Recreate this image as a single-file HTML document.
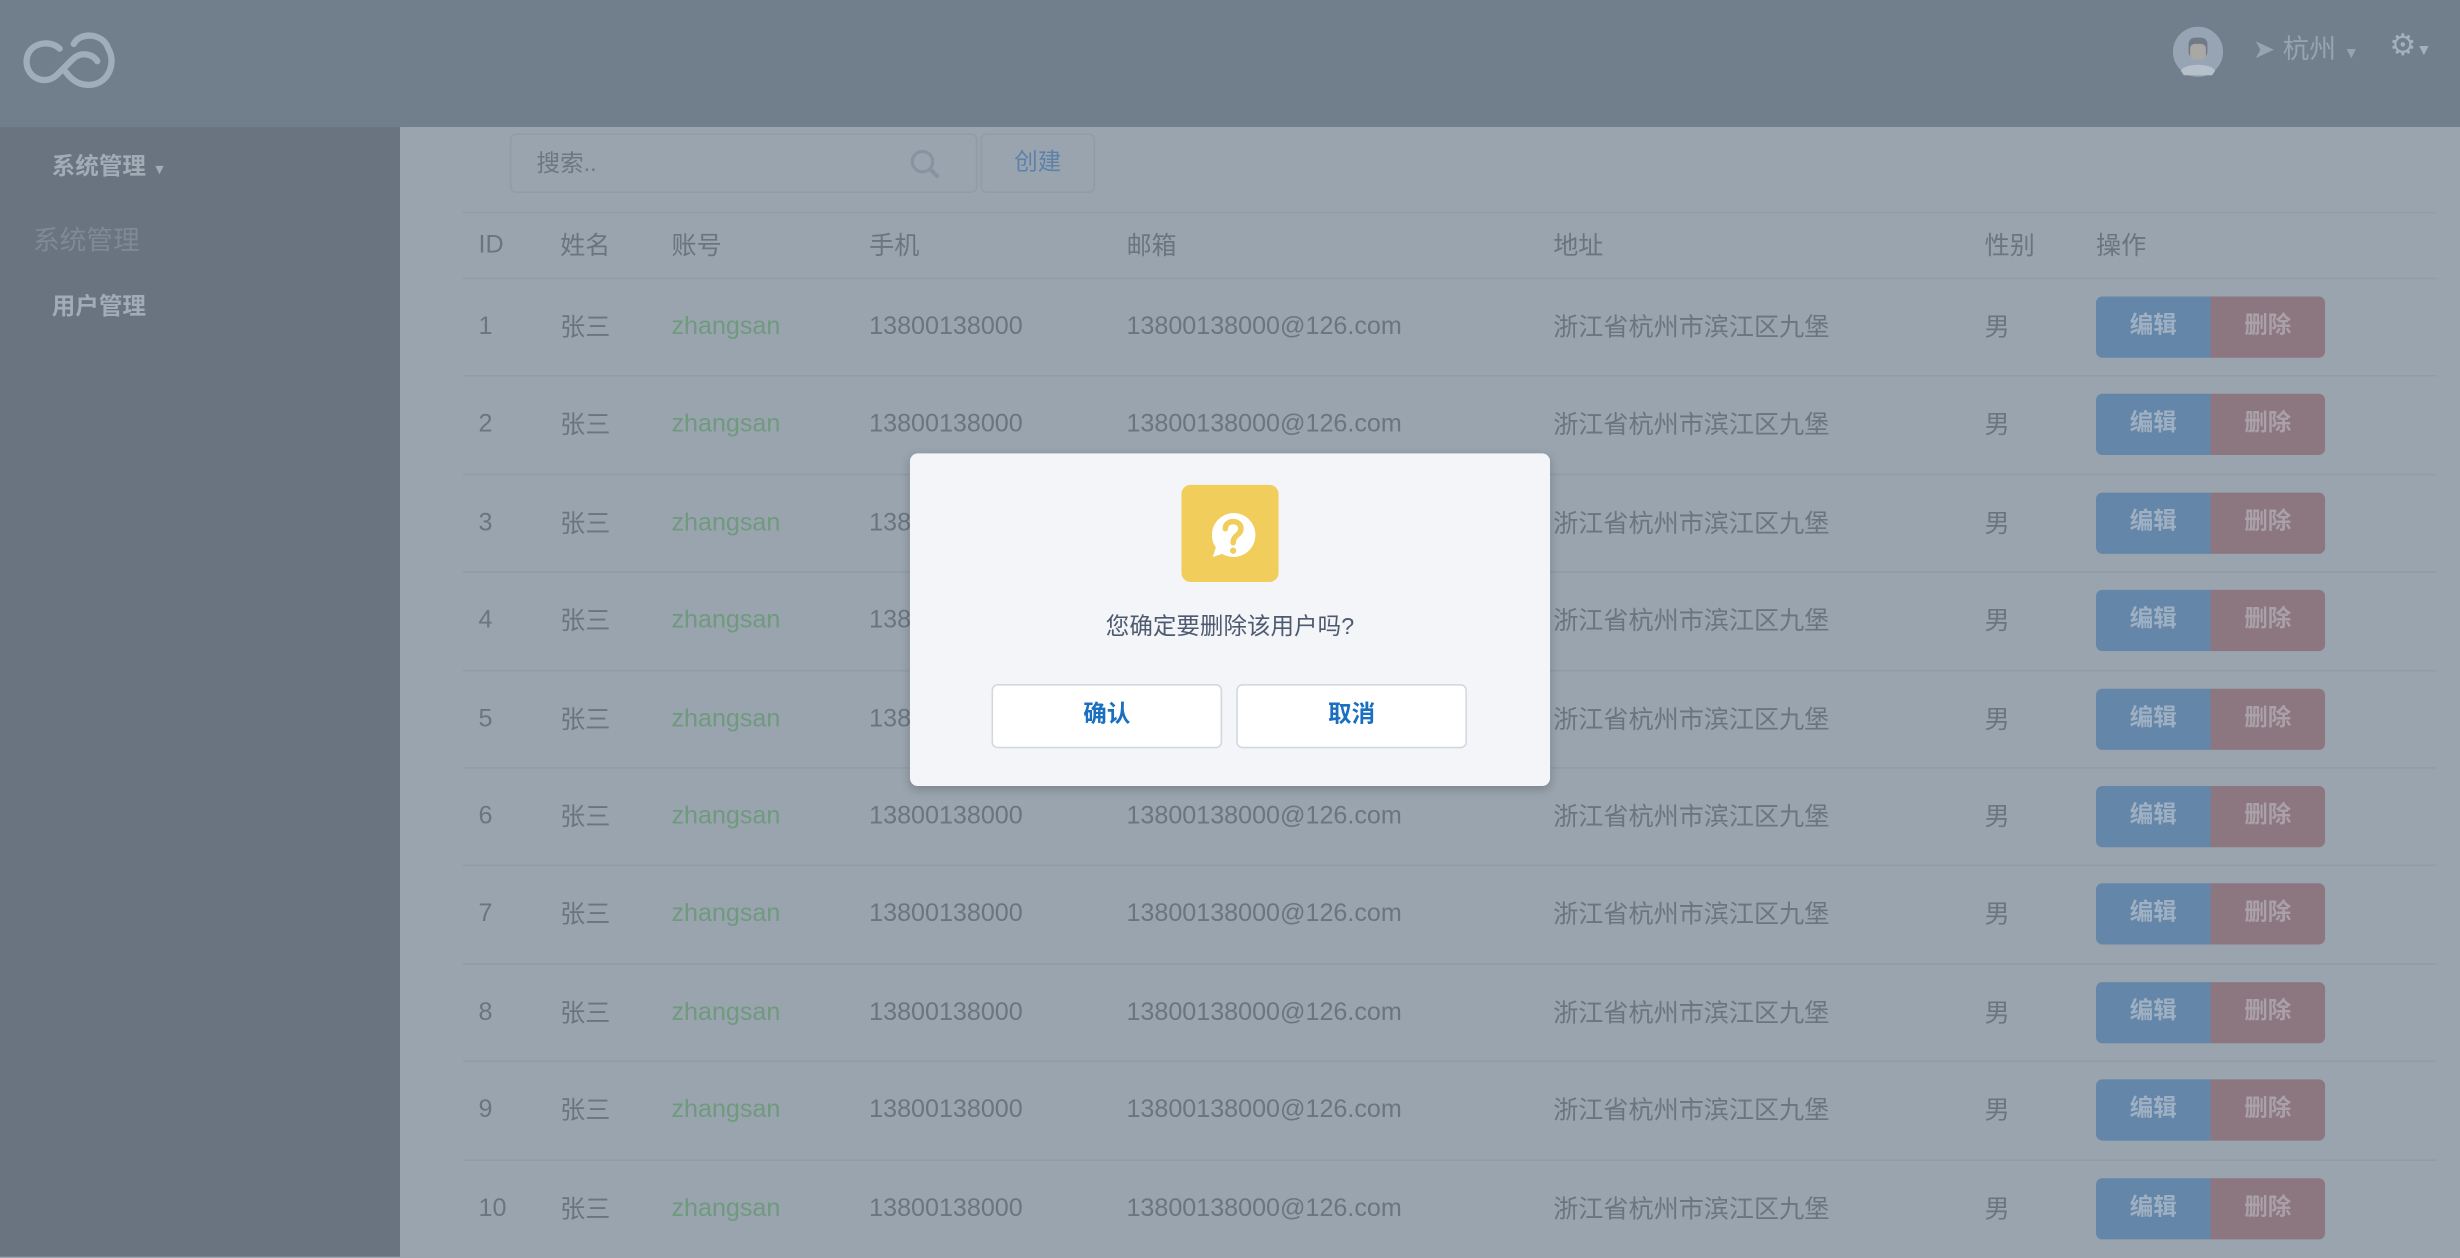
<!DOCTYPE html>
<html><head><meta charset="utf-8"><style>
html,body{margin:0;padding:0;width:2460px;height:1238px;overflow:hidden;background:#9aa4ae}
#w{position:absolute;left:0;top:0;width:1568px;height:790px;transform:scale(1.56888);transform-origin:0 0;font-family:"Liberation Sans","Noto Sans CJK SC",sans-serif;color:#6b7580}
.hdr{position:absolute;left:0;top:0;width:1568px;height:81px;background:#717f8d}
.side{position:absolute;left:0;top:81px;width:255px;height:720px;background:#6a7480}
.main{position:absolute;left:255px;top:81px;width:1313px;height:720px;background:#9aa4ae}
.a{position:absolute;white-space:nowrap}
.row{position:absolute;left:295px;width:1258px;height:62px;border-top:1px solid #929ca6;font-size:16px}
.row span{position:absolute;top:22px}
.row span.c{top:17px}
.be{position:absolute;left:1041px;top:11px;width:73px;height:39px;background:#6486a8;border-radius:4px 0 0 4px;color:#9fb0c3;font-size:15px;font-weight:bold;text-align:center;line-height:38px}
.bd{position:absolute;left:1114px;top:11px;width:73px;height:39px;background:#8c7680;border-radius:0 4px 4px 0;color:#a9a0a8;font-size:15px;font-weight:bold;text-align:center;line-height:38px}
.modal{position:absolute;left:580px;top:289px;width:408px;height:212px;background:#f3f5f8;border-radius:5px;box-shadow:0 2px 6px rgba(0,0,0,.2)}
.mb{position:absolute;top:147px;width:145px;height:39px;background:#fff;border:1px solid #d4d8de;border-radius:4px;color:#1a6fc0;font-size:15px;font-weight:bold;text-align:center;line-height:38px}
</style></head><body><div id="w">
<div class="hdr">
<svg class="a" style="left:14px;top:19px" width="60" height="38" viewBox="0 0 60 38"><path d="M24 12 C18 6 4 8 3 19 C2 30 14 36 22 29 L32 19 C38 13 46 16 48 20 M33 9 C37 1 52 2 55 12 C60 20 56 34 44 35 C36 36 31 31 28 27" fill="none" stroke="#a1adb9" stroke-width="4" stroke-linecap="round"/></svg>
<svg class="a" style="left:1385px;top:17px" width="32" height="32" viewBox="0 0 32 32"><circle cx="16" cy="16" r="16" fill="#97a4b3"/><rect x="10" y="7" width="12" height="13" rx="4" fill="#6f7a86"/><rect x="11" y="11" width="10" height="10" rx="3" fill="#a9a8a5"/><path d="M5 28 C8 23 24 23 27 28 L25 31 L7 31Z" fill="#b5c0cb"/></svg>
<div class="a" style="left:1436px;top:17px;font-size:17px;color:#97a3b0">➤ 杭州 <span style="font-size:10px">▼</span></div>
<div class="a" style="left:1523px;top:18px;font-size:19px;color:#a4b0bd">⚙<span style="font-size:10px">▼</span></div>
</div>
<div class="side">
<div class="a" style="left:33px;top:14px;font-size:15px;font-weight:bold;color:#a2acb7">系统管理 <span style="font-size:9px">▼</span></div>
<div class="a" style="left:21px;top:58px;font-size:17px;color:#7f8a96">系统管理</div>
<div class="a" style="left:33px;top:103px;font-size:15px;font-weight:bold;color:#a2acb7">用户管理</div>
</div>
<div class="main"></div>
<div class="a" style="left:325px;top:85px;width:298px;height:38px;border:1px solid #929ca6;border-radius:4px;box-sizing:border-box"><span class="a" style="left:16px;top:7px;font-size:15px;color:#6d7782">搜索..</span>
<svg class="a" style="left:253px;top:8px" width="22" height="22" viewBox="0 0 22 22"><circle cx="9" cy="9" r="6.5" fill="none" stroke="#8892a0" stroke-width="2"/><path d="M14 14 L19 19" stroke="#8892a0" stroke-width="2.5"/></svg></div>
<div class="a" style="left:625px;top:85px;width:73px;height:38px;border:1px solid #929ca6;border-radius:4px;box-sizing:border-box;text-align:center;line-height:36px;font-size:15px;color:#5d82aa">创建</div>
<div class="row" style="top:135px;height:42px"><span style="left:10px;top:12px">ID</span><span style="left:62px;top:7px">姓名</span><span style="left:133px;top:7px">账号</span><span style="left:259px;top:7px">手机</span><span style="left:423px;top:7px">邮箱</span><span style="left:695px;top:7px">地址</span><span style="left:970px;top:7px">性别</span><span style="left:1041px;top:7px">操作</span></div>
<div id="rows"></div>
<div class="modal">
<svg class="a" style="left:173px;top:20px" width="62" height="62" viewBox="0 0 62 62"><rect width="62" height="62" rx="6" fill="#f1cd5c"/><path d="M33 18 A14 14 0 1 1 26 44 L20 46 L22 40 A14 14 0 0 1 33 18Z" fill="#fff"/><path d="M28 28 C28 22 38 22 38 28 C38 32 33 32 33 37" fill="none" stroke="#f1cd5c" stroke-width="3.5" stroke-linecap="round"/><circle cx="33" cy="42" r="2" fill="#f1cd5c"/></svg>
<div class="a" style="left:0;width:408px;text-align:center;top:99px;font-size:15px;color:#4d5a70">您确定要删除该用户吗?</div>
<div class="mb" style="left:52px">确认</div><div class="mb" style="left:208px">取消</div>
</div>
</div>
<script>
var h='';for(var i=0;i<10;i++){var t=177+i*62.4;h+='<div class="row" style="top:'+t+'px"><span style="left:10px">'+(i+1)+'</span><span class="c" style="left:62px">张三</span><span style="left:133px;color:#6f9a7e">zhangsan</span><span style="left:259px">13800138000</span><span style="left:423px">13800138000@126.com</span><span class="c" style="left:695px">浙江省杭州市滨江区九堡</span><span class="c" style="left:970px">男</span><div class="be">编辑</div><div class="bd">删除</div></div>';}
document.getElementById('rows').outerHTML=h;
</script>
</body></html>
